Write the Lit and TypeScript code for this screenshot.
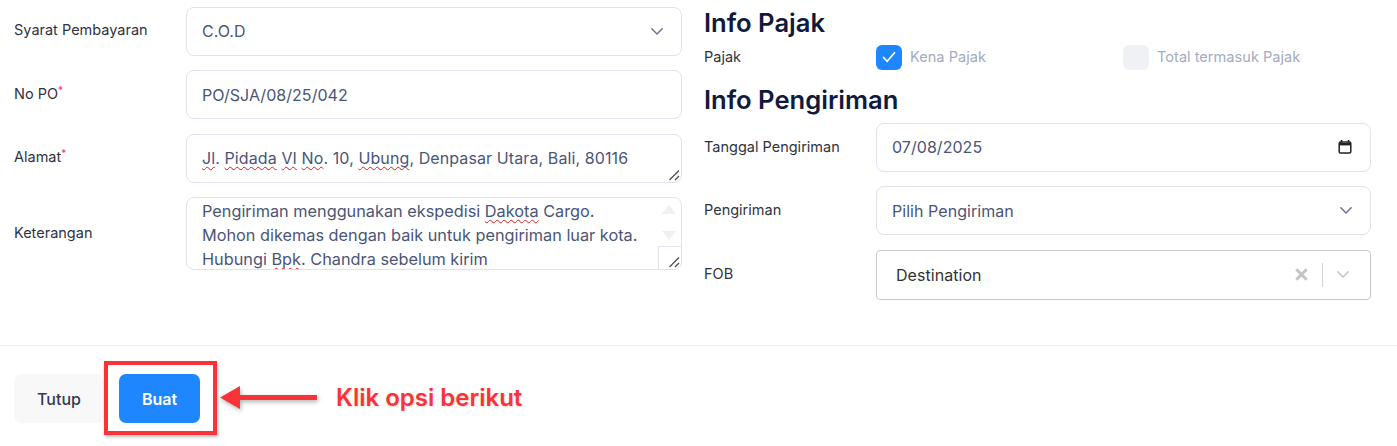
import { LitElement, html, css } from "lit";
import { customElement } from "lit/decorators.js";

const chevron = html`<svg class="chev" width="12" height="7" viewBox="0 0 12 7" fill="none"><path d="M.8.8 6 6 11.200.8" stroke="#64708c" stroke-width="1.400" stroke-linecap="round" stroke-linejoin="round"/></svg>`;
const grip = html`<svg class="grip" width="12" height="12" viewBox="0 0 12 12" fill="none"><path d="M1.500 11 11 1.500M7 11l4-4" stroke="#4a4a4a" stroke-width="1.200"/></svg>`;

@customElement("app-root")
export class AppRoot extends LitElement {
  static styles = css`
    :host { display: block; position: relative; width: 1397px; height: 446px; overflow: hidden; background: #fff; font-family: Inter, "Liberation Sans", sans-serif; color: #333c52; }
    .form { display: grid; grid-template-columns: 668px 667px; column-gap: 22px; padding: 6.75px 0 0 14px; height: 344.5px; box-sizing: border-box; }
    .col { display: flex; flex-direction: column; }
    .rows { display: flex; flex-direction: column; gap: 14.5px; }
    .row { display: grid; grid-template-columns: 172px 1fr; align-items: center; }
    .right .row { grid-template-columns: 172px 495px; }
    .label { font-size: 14.5px; line-height: 20px; color: #2f3340; position: relative; top: -1px; }
    .label.low { top: 0; }
    .req { color: #f5365c; font-size: 10px; position: relative; top: -5px; line-height: 0; }
    .field { box-sizing: border-box; height: 49px; border: 1px solid #dfe3f0; border-radius: 8px; display: flex; align-items: center; justify-content: space-between; padding: 0 18px 0 15px; font-size: 16px; color: #4a5578; position: relative; background: #fff; }
    .field .txt { letter-spacing: 0.05px; position: relative; top: -0.5px; }
    .field .txt.low { top: 0.5px; }
    .field .txt.addr { letter-spacing: 0.1px; }
    .chev { flex: none; }
    .grip { position: absolute; right: 1px; bottom: 1px; }
    .wavy { text-decoration: underline wavy #e01b1b 1.2px; text-underline-offset: 2px; text-decoration-skip-ink: none; }
    .area { height: 73px; padding: 0 0 0 15px; overflow: hidden; line-height: 24px; display: block; padding-top: 1px; font-size: 16.3px; }
    .scroll { position: absolute; right: 0; top: 0; bottom: 0; width: 24px; }
    .up, .down { position: absolute; left: 5px; width: 0; height: 0; border-left: 7px solid transparent; border-right: 7px solid transparent; }
    .up { top: 7px; border-bottom: 9px solid #eff0f3; }
    .down { top: 33px; border-top: 9px solid #eff0f3; }
    .corner { position: absolute; right: 0; bottom: 0; width: 23px; height: 23px; border-left: 1px solid #dfe3f0; border-top: 1px solid #dfe3f0; box-sizing: border-box; }
    h2 { margin: 0; font-size: 25.6px; line-height: 31px; font-weight: 600; color: #101a3c; }
    .tax { display: grid; grid-template-columns: 172px 247px 1fr; align-items: center; height: 27px; margin-top: 6px; }
    .tax .label { top: 0; }
    .check { display: flex; align-items: center; gap: 8px; font-size: 14.6px; color: #a5abc0; }
    .box { width: 26px; height: 25px; border-radius: 6px; background: #f0f1f4; display: flex; align-items: center; justify-content: center; }
    .box.on { background: #1e86ff; }
    .second { margin-top: 13.5px; margin-bottom: 7.5px; }
    .fob { height: 50px; border: 1px solid #c8c8c8; border-radius: 4px; padding: 0 21px 0 19px; color: #333; }
    .tools { display: flex; align-items: center; }
    .x { margin-right: 14px; }
    .sep { width: 1px; height: 24px; background: #d4d4d4; margin-right: 14px; }
    .footer { border-top: 1px solid #ececef; padding: 28.5px 14px 0; display: flex; gap: 15px; }
    button { font: inherit; border: none; height: 49px; border-radius: 7px; font-size: 16px; font-weight: 500; padding: 0; }
    .close { width: 90px; background: #f8f8f9; color: #333c52; }
    .make { width: 81px; background: #1e86ff; color: #fff; font-weight: 600; }
    .hl { position: absolute; left: 104px; top: 361px; width: 113px; height: 74px; box-sizing: border-box; border: 4px solid #f93337; box-shadow: 1px 2px 3px rgba(0,0,0,.25); }
    .arrow { position: absolute; left: 219px; top: 385px; filter: drop-shadow(1px 2px 2px rgba(0,0,0,.3)); }
    .note { position: absolute; left: 336px; top: 383px; font-size: 24px; line-height: 30px; font-weight: 600; color: #f93337; text-shadow: 1px 1px 2px rgba(0,0,0,.15); white-space: nowrap; }
  `;

  render() {
    return html`
      <div class="form">
        <div class="col rows">
          <div class="row"><div class="label">Syarat Pembayaran</div><div class="field"><span class="txt">C.O.D</span>${chevron}</div></div>
          <div class="row"><div class="label">No PO<span class="req">*</span></div><div class="field"><span class="txt low">PO/SJA/08/25/042</span></div></div>
          <div class="row"><div class="label">Alamat<span class="req">*</span></div><div class="field"><span class="txt addr"><span class="wavy">Jl</span>. <span class="wavy">Pidada</span> <span class="wavy">VI</span> <span class="wavy">No</span>. 10, <span class="wavy">Ubung</span>, Denpasar Utara, Bali, 80116</span>${grip}</div></div>
          <div class="row"><div class="label">Keterangan</div><div class="field area">
            <div>Pengiriman menggunakan ekspedisi <span class="wavy">Dakota</span> Cargo.</div>
            <div>Mohon dikemas dengan baik untuk pengiriman luar kota.</div>
            <div>Hubungi <span class="wavy">Bpk</span>. Chandra sebelum kirim</div>
            <div class="scroll"><div class="up"></div><div class="down"></div></div>
            <div class="corner">${grip}</div>
          </div></div>
        </div>
        <div class="col right">
          <h2>Info Pajak</h2>
          <div class="tax">
            <div class="label">Pajak</div>
            <div class="check"><span class="box on"><svg width="16" height="14" viewBox="0 0 16 14" fill="none"><path d="M2.500 7.500 6.200 11.300 13.500 2.700" stroke="#fff" stroke-width="1.700" stroke-linecap="round" stroke-linejoin="round"/></svg></span>Kena Pajak</div>
            <div class="check"><span class="box"></span>Total termasuk Pajak</div>
          </div>
          <h2 class="second">Info Pengiriman</h2>
          <div class="rows">
            <div class="row"><div class="label low">Tanggal Pengiriman</div><div class="field"><span class="txt">07/08/2025</span><svg width="14" height="16" viewBox="0 0 14 16" fill="none"><path d="M3.500 1v2.500M10.500 1v2.500" stroke="#222" stroke-width="1.600"/><rect x="1.200" y="3" width="11.600" height="11" rx="1.300" stroke="#222" stroke-width="1.500"/><path d="M1.500 4h11v2.400h-11z" fill="#222"/></svg></div></div>
            <div class="row"><div class="label">Pengiriman</div><div class="field"><span class="txt low">Pilih Pengiriman</span>${chevron}</div></div>
            <div class="row"><div class="label">FOB</div><div class="field fob"><span class="txt low">Destination</span><div class="tools"><svg class="x" width="13" height="13" viewBox="0 0 13 13" fill="none"><path d="M1.300 1.300l10.400 10.400M11.700 1.300 1.300 11.700" stroke="#c4c4c4" stroke-width="3"/></svg><span class="sep"></span><svg width="12" height="7" viewBox="0 0 12 7" fill="none"><path d="M.8.8 6 6 11.200.8" stroke="#c4c4c4" stroke-width="1.500" stroke-linecap="round" stroke-linejoin="round"/></svg></div></div></div>
          </div>
        </div>
      </div>
      <div class="footer">
        <button class="close">Tutup</button>
        <button class="make">Buat</button>
      </div>
      <div class="hl"></div>
      <svg class="arrow" width="100" height="25" viewBox="0 0 100 25" fill="none"><path d="M1 12.500 21 1v9h77v5H21v9z" fill="#f93337"/></svg>
      <div class="note">Klik opsi berikut</div>
    `;
  }
}
